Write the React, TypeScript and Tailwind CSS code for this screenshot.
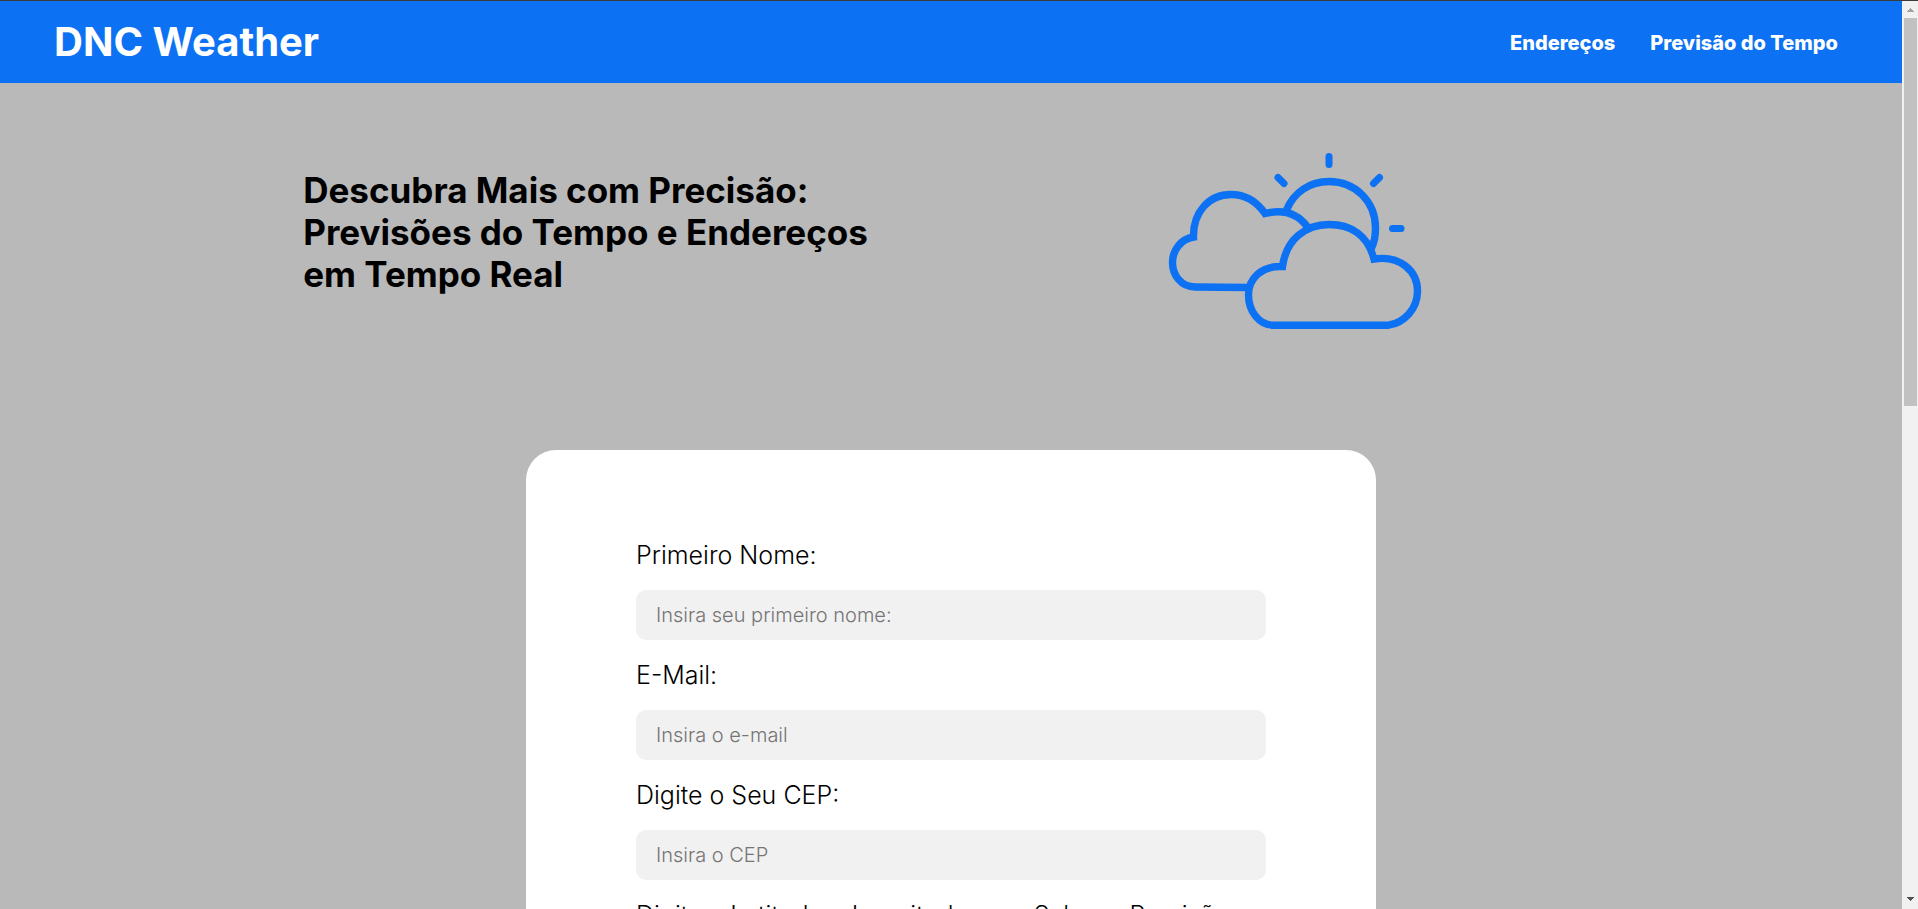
const fields = [
  { id: "nome", type: "text", label: "Primeiro Nome:", placeholder: "Insira seu primeiro nome:" },
  { id: "email", type: "email", label: "E-Mail:", placeholder: "Insira o e-mail" },
  { id: "cep", type: "text", label: "Digite o Seu CEP:", placeholder: "Insira o CEP" },
];

function WeatherIcon() {
  return (
    <svg
      viewBox="0 0 290 200"
      className="h-[200px] w-[290px] shrink-0"
      fill="none"
      stroke="#0c71f3"
      strokeWidth="7.4"
      aria-hidden="true"
    >
      <path d="M98 147.5 L45 147 C31 147 22.5 135 22.5 122.5 C22.5 110 31 99 43.5 97 C43 72 59 54.5 81 54.5 C96 54.5 107 62 115 73.5 C135 68.5 148 74 157.5 87" />
      <path d="M136.5 70 C144 52 160 41.5 179 41.5 C206 41.5 225.5 62 225.5 88 C225.5 96 224.5 102 221.5 108" />
      <path d="M123 185.2 C109 185 98.5 171 98.5 155 C98.5 138 112 125.5 132.5 126.5 C136 100 155 84.5 179 84.5 C202 84.5 218 96 224 119 C250 115 267.5 131 267.5 151 C267.5 169 254 183 238.5 185.2 Z" />
      <g strokeWidth="7" strokeLinecap="round">
        <path d="M179 16.5 V24.5" />
        <path d="M128 37.5 L134 43.5" />
        <path d="M229.5 37.5 L223.5 43.5" />
        <path d="M242.5 88.5 H251" />
      </g>
    </svg>
  );
}

function Scrollbar() {
  return (
    <div aria-hidden="true" className="flex w-4 shrink-0 flex-col items-center bg-[#f1f1f1]">
      <div className="flex h-[17px] items-center">
        <svg viewBox="0 0 7 4" className="h-1 w-[7px]" fill="#a3a3a3" shapeRendering="crispEdges">
          <path d="M3 0h1v1h1v1h1v1h1v1H0V3h1V2h1V1h1z" />
        </svg>
      </div>
      <div className="h-[388px] w-[13px] bg-[#c1c1c1]" />
      <div className="mt-auto flex h-[17px] items-center pb-1">
        <svg viewBox="0 0 7 4" className="h-1 w-[7px]" fill="#505050" shapeRendering="crispEdges">
          <path d="M0 0h7v1H6v1H5v1H4v1H3V3H2V2H1V1H0z" />
        </svg>
      </div>
    </div>
  );
}

export default function App() {
  return (
    <div className="flex h-screen overflow-hidden border-t border-[#3b3b3b] bg-[#b9b9b9] font-['Inter',sans-serif] text-black">
      <div className="min-w-0 flex-1 overflow-hidden">
        <header className="flex h-[82px] items-center justify-between bg-[#0c71f3] pr-16 pl-[54px] text-white">
          <h1 className="text-[40px] leading-[48px] font-bold">DNC Weather</h1>
          <nav className="flex gap-[35px] pt-0.5 text-xl font-extrabold">
            <a href="#enderecos">Endereços</a>
            <a href="#previsao">Previsão do Tempo</a>
          </nav>
        </header>

        <main>
          <section className="mx-auto flex w-4/5 items-start justify-between pt-[57px] pr-[272px] pl-[113px]">
            <h2 className="w-[600px] pt-[29px] text-[35px] leading-[42px] font-bold">
              Descubra Mais com Precisão: Previsões do Tempo e Endereços em Tempo Real
            </h2>
            <WeatherIcon />
          </section>

          <form className="mx-auto mt-[110px] flex w-[850px] flex-col gap-5 rounded-[30px] bg-white px-[110px] py-[90px] text-[25px] leading-[30px] font-light">
            {fields.map((f) => (
              <div key={f.id} className="flex flex-col gap-5">
                <label htmlFor={f.id}>{f.label}</label>
                <input
                  id={f.id}
                  type={f.type}
                  placeholder={f.placeholder}
                  className="h-[50px] rounded-[10px] bg-[#f1f1f1] px-5 text-xl font-light placeholder:text-[#757575]"
                />
              </div>
            ))}
            <div className="flex flex-col gap-5">
              <label htmlFor="coordenadas">Digite a Latitude e Longitude para Saber a Previsão</label>
              <input
                id="coordenadas"
                type="text"
                className="h-[50px] rounded-[10px] bg-[#f1f1f1] px-5 text-xl font-light"
              />
            </div>
          </form>
        </main>
      </div>
      <Scrollbar />
    </div>
  );
}
